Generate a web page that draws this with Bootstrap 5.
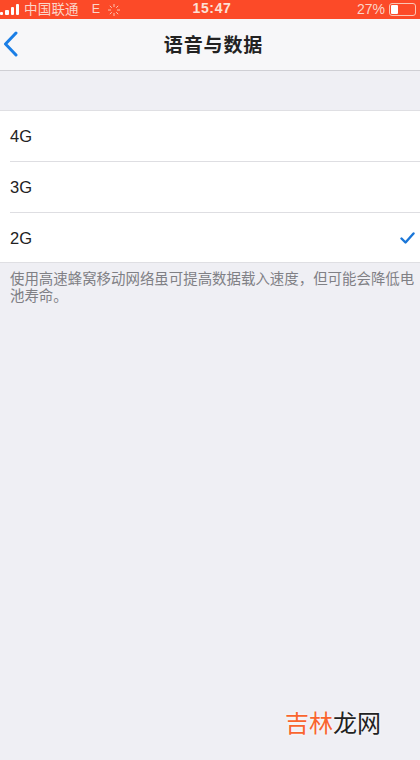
<!DOCTYPE html>
<html lang="zh">
<head>
<meta charset="utf-8">
<title>语音与数据</title>
<link rel="stylesheet" href="https://cdn.jsdelivr.net/npm/bootstrap@5.3.0/dist/css/bootstrap.min.css">
<style>
html,body{width:420px;height:760px;overflow:hidden}
body{background:#efeff4;font-family:"Liberation Sans","Noto Sans CJK SC",sans-serif;color:#1c1c1e;position:relative}
.stat{height:19px;background:#fc4a28;color:#fbd5c8;font-size:13.5px;line-height:19px;padding:0}
.sig{gap:2px;width:19px}
.sig i{display:block;width:3.5px;background:#fff;border-radius:1px}
.carrier{margin-left:5px;letter-spacing:.2px}
.netw{margin-left:13px;font-size:12.5px}
.spin{margin-left:8px}
.clock{left:0;right:0;top:0;text-align:center;color:#fde0d5;font-size:14px;font-weight:700;letter-spacing:.6px;line-height:16px;padding-left:4px}
.pct{margin-right:4px;font-size:14px}
.batt{width:27px;height:13px;border:1px solid #fbc5b3;border-radius:3px;padding:1px;margin-right:4px}
.batt b{display:block;width:7px;height:100%;background:#fff;border-radius:1px}
.topbar{height:52px;background:#f7f7f9;border-bottom:1px solid #cfcfd4}
.ttl{font-size:19px;font-weight:700;color:#222;letter-spacing:.9px;left:0;right:0;top:0;line-height:54px;text-align:center;padding-left:7px}
.back{margin-left:3px;margin-top:-1px}
.spacer{height:39px}
.rows{background:#fff;border-top:1px solid #dfdfe3;border-bottom:1px solid #dfdfe3}
.rowitem{height:50px;margin-left:10px;padding-right:5px;font-size:16.5px;color:#222}
.rowitem+.rowitem{border-top:1px solid #dedee2;height:51px}
.rowitem.lastone{height:50px;padding-top:1px}
.foot{font-size:14.45px;line-height:17px;color:#808085;padding:8px 0 0 10px;width:420px}
.wm{left:285px;top:709px;font-size:24px;line-height:30px;color:#222;text-shadow:0 0 3px #fff}
.wm span{color:#f9652f}
</style>
</head>
<body>
<div class="stat d-flex align-items-center position-relative">
  <div class="sig d-flex align-items-end" style="height:11px">
    <i style="height:3px"></i><i style="height:5px"></i><i style="height:8px"></i><i style="height:11px"></i>
  </div>
  <span class="carrier">中国联通</span>
  <span class="netw">E</span>
  <svg class="spin" width="12" height="12" viewBox="0 0 12 12" stroke="#fbc5b3" stroke-width="1"><path d="M6 0v3M6 9v3M0 6h3M9 6h3M1.8 1.8l2 2M8.2 8.2l2 2M1.8 10.2l2-2M8.2 3.8l2-2"/></svg>
  <div class="clock position-absolute">15:47</div>
  <div class="ms-auto d-flex align-items-center">
    <span class="pct">27%</span>
    <div class="batt"><b></b></div>
  </div>
</div>
<div class="topbar d-flex align-items-center position-relative">
  <svg class="back" width="16" height="26" viewBox="0 0 16 26" fill="none" stroke="#1a7ee6" stroke-width="3" stroke-linecap="round" stroke-linejoin="round"><path d="M13 2 2.5 13 13 24"/></svg>
  <div class="ttl position-absolute">语音与数据</div>
</div>
<div class="spacer"></div>
<div class="rows">
  <div class="rowitem d-flex align-items-center">4G</div>
  <div class="rowitem d-flex align-items-center">3G</div>
  <div class="rowitem lastone d-flex align-items-center justify-content-between">2G
    <svg width="15" height="12" viewBox="0 0 15 12" fill="none" stroke="#1a76d8" stroke-width="2.4" stroke-linecap="round" stroke-linejoin="round"><path d="M1.5 6.5 5.5 10.5 13.5 1.5"/></svg>
  </div>
</div>
<div class="foot">使用高速蜂窝移动网络虽可提高数据载入速度，但可能会降低电池寿命。</div>
<div class="wm position-absolute"><span>吉林</span>龙网</div>
<script src="https://cdn.jsdelivr.net/npm/bootstrap@5.3.0/dist/js/bootstrap.bundle.min.js"></script>
</body>
</html>
